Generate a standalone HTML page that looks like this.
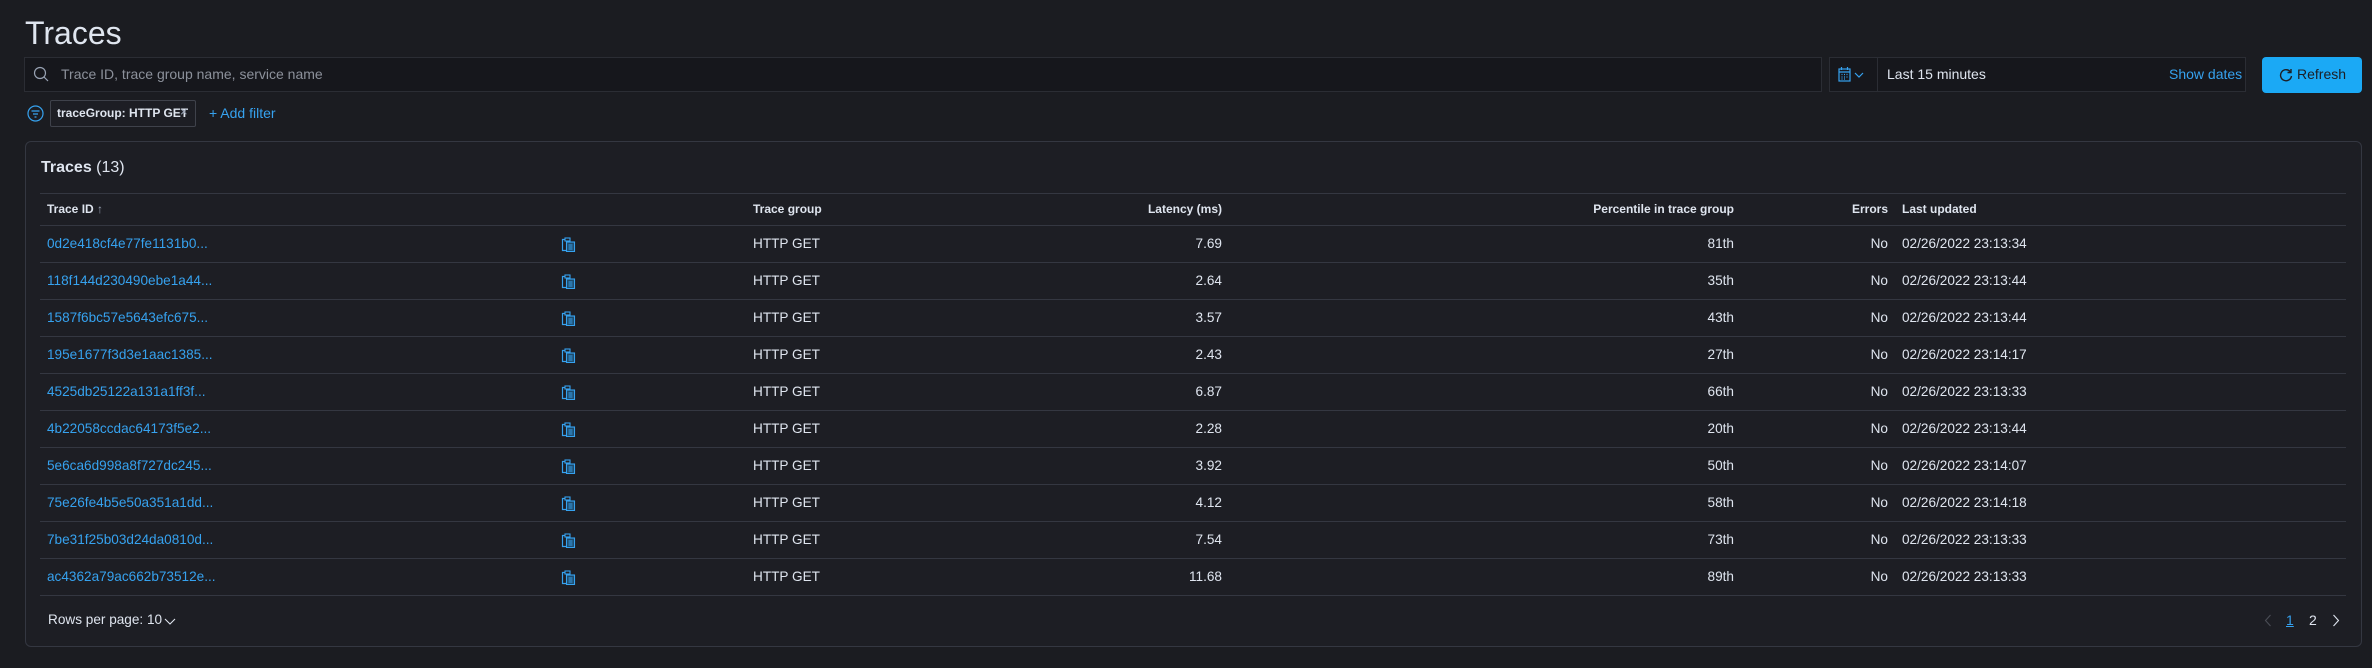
<!DOCTYPE html>
<html><head><meta charset="utf-8"><style>
*{box-sizing:border-box;margin:0;padding:0}
body{width:2372px;height:668px;background:#1b1c21;font-family:"Liberation Sans",sans-serif;color:#dfe5ef;position:relative;overflow:hidden}
.a{position:absolute;white-space:nowrap}
.r{text-align:right}
.line{position:absolute;left:40px;width:2306px;height:1px;background:#343741}
.link{color:#36a2ef}
.hd{font-size:12px;font-weight:bold;color:#dfe5ef}
.cell{font-size:13.6px}
</style></head><body>
<div class="a" style="left:25px;top:15px;font-size:32px;color:#dfe5ef">Traces</div>

<div class="a" style="left:24px;top:57px;width:1798px;height:35px;background:#16171c;border:1px solid #2b2d34"></div>
<svg class="a" style="left:33px;top:66px" width="16" height="17" viewBox="0 0 16 17"><circle cx="7" cy="7" r="5.5" fill="none" stroke="#98a2b3" stroke-width="1.2"/><path d="M11 11l4 4" stroke="#98a2b3" stroke-width="1.2"/></svg>
<div class="a" style="left:61px;top:66px;font-size:14px;color:#8c919b">Trace ID, trace group name, service name</div>

<div class="a" style="left:1829px;top:57px;width:417px;height:35px;background:#16171c;border:1px solid #2b2d34"></div>
<div class="a" style="left:1877px;top:58px;width:1px;height:33px;background:#2b2d34"></div>
<svg class="a" style="left:1838px;top:67px" width="30" height="16" viewBox="0 0 30 16"><rect x="1" y="2" width="11" height="12" fill="none" stroke="#36a2ef" stroke-width="1.2"/><path d="M1 5h11M3.5 7.5h1M6 7.5h1M8.5 7.5h1M3.5 10h1M6 10h1M8.5 10h1M3.5 12h1M6 12h1M3.5 0v3M9.5 0v3" stroke="#36a2ef" stroke-width="1.2"/><path d="M17 6l4 4 4-4" fill="none" stroke="#36a2ef" stroke-width="1.2"/></svg>
<div class="a" style="left:1887px;top:66px;font-size:14px;color:#dfe5ef">Last 15 minutes</div>
<div class="a" style="left:2169px;top:66px;font-size:14px;color:#36a2ef">Show dates</div>

<div class="a" style="left:2262px;top:57px;width:100px;height:36px;background:#1ba9f5;border-radius:4px"></div>
<svg class="a" style="left:2279px;top:68px" width="14" height="14" viewBox="0 0 14 14"><path d="M11.5 4A5.5 5.5 0 1 0 12.5 8" fill="none" stroke="#1d1e24" stroke-width="1.4"/><path d="M12 1v3.5H8.5" fill="none" stroke="#1d1e24" stroke-width="1.4"/></svg>
<div class="a" style="left:2297px;top:66px;font-size:14px;color:#1d1e24">Refresh</div>

<svg class="a" style="left:27px;top:105px" width="17" height="17" viewBox="0 0 17 17"><circle cx="8.5" cy="8.5" r="7.5" fill="none" stroke="#36a2ef" stroke-width="1.2"/><path d="M4.5 6h8M6 9h5M7.5 12h2" stroke="#36a2ef" stroke-width="1.2"/></svg>
<div class="a" style="left:50px;top:100px;width:146px;height:27px;border:1px solid #3f424b;border-radius:2px;background:#1d1e24"></div>
<div class="a" style="left:57px;top:106px;font-size:12px;font-weight:bold;color:#dfe5ef">traceGroup: HTTP GET</div>
<div class="a" style="left:180px;top:104px;font-size:13px;color:#98a2b3">×</div>
<div class="a" style="left:209px;top:105px;font-size:14px;color:#36a2ef">+ Add filter</div>

<div class="a" style="left:25px;top:141px;width:2337px;height:506px;border:1px solid #343741;border-radius:6px;background:#1d1e24"></div>
<div class="a" style="left:41px;top:159px;font-size:16px;font-weight:bold;color:#dfe5ef">Traces <span style="font-weight:normal">(13)</span></div>

<div class="line" style="top:193px"></div>
<div class="line" style="top:225px"></div>
<div class="a hd" style="left:47px;top:202px">Trace ID <span style="font-weight:normal;color:#98a2b3">↑</span></div>
<div class="a hd" style="left:753px;top:202px">Trace group</div>
<div class="a hd r" style="left:1022px;width:200px;top:202px">Latency (ms)</div>
<div class="a hd r" style="left:1534px;width:200px;top:202px">Percentile in trace group</div>
<div class="a hd r" style="left:1788px;width:100px;top:202px">Errors</div>
<div class="a hd" style="left:1902px;top:202px">Last updated</div>

<div id="rows"></div>
<script>
var d=[["0d2e418cf4e77fe1131b0...","7.69","81th","02/26/2022 23:13:34"],
["118f144d230490ebe1a44...","2.64","35th","02/26/2022 23:13:44"],
["1587f6bc57e5643efc675...","3.57","43th","02/26/2022 23:13:44"],
["195e1677f3d3e1aac1385...","2.43","27th","02/26/2022 23:14:17"],
["4525db25122a131a1ff3f...","6.87","66th","02/26/2022 23:13:33"],
["4b22058ccdac64173f5e2...","2.28","20th","02/26/2022 23:13:44"],
["5e6ca6d998a8f727dc245...","3.92","50th","02/26/2022 23:14:07"],
["75e26fe4b5e50a351a1dd...","4.12","58th","02/26/2022 23:14:18"],
["7be31f25b03d24da0810d...","7.54","73th","02/26/2022 23:13:33"],
["ac4362a79ac662b73512e...","11.68","89th","02/26/2022 23:13:33"]];
var h="";
d.forEach(function(r,i){var t=225+37*i,ty=t+11;
h+='<div class="line" style="top:'+(t+37)+'px"></div>';
h+='<div class="a cell link" style="left:47px;top:'+ty+'px">'+r[0]+'</div>';
h+='<svg class="a" style="left:561px;top:'+(t+12)+'px" width="15" height="15" viewBox="0 0 15 15"><path d="M4 2.5H1.5v11H5" fill="none" stroke="#36a2ef" stroke-width="1.2"/><rect x="4" y="1" width="5" height="3" fill="none" stroke="#36a2ef" stroke-width="1.1"/><rect x="5.5" y="5" width="8" height="9.5" fill="#1e4a6a" stroke="#36a2ef" stroke-width="1.1"/><path d="M7.5 8h4M7.5 10h4M7.5 12h4" stroke="#36a2ef" stroke-width="0.9"/></svg>';
h+='<div class="a cell" style="left:753px;top:'+ty+'px">HTTP GET</div>';
h+='<div class="a cell r" style="left:1022px;width:200px;top:'+ty+'px">'+r[1]+'</div>';
h+='<div class="a cell r" style="left:1534px;width:200px;top:'+ty+'px">'+r[2]+'</div>';
h+='<div class="a cell r" style="left:1788px;width:100px;top:'+ty+'px">No</div>';
h+='<div class="a cell" style="left:1902px;top:'+ty+'px">'+r[3]+'</div>';});
document.getElementById("rows").innerHTML=h;
</script>

<div class="a" style="left:48px;top:612px;font-size:13.6px;color:#dfe5ef">Rows per page: 10</div>
<svg class="a" style="left:164px;top:616px" width="12" height="10" viewBox="0 0 12 10"><path d="M1 3l5 5 5-5" fill="none" stroke="#dfe5ef" stroke-width="1.1"/></svg>
<svg class="a" style="left:2264px;top:614px" width="8" height="13" viewBox="0 0 8 13"><path d="M6.5 1L1.5 6.5l5 5.5" fill="none" stroke="#4a4d55" stroke-width="1.1"/></svg>
<div class="a" style="left:2286px;top:612px;font-size:14px;color:#36a2ef;text-decoration:underline">1</div>
<div class="a" style="left:2309px;top:612px;font-size:14px;color:#dfe5ef">2</div>
<svg class="a" style="left:2332px;top:614px" width="8" height="13" viewBox="0 0 8 13"><path d="M1.5 1l5 5.5-5 5.5" fill="none" stroke="#dfe5ef" stroke-width="1.1"/></svg>
</body></html>
